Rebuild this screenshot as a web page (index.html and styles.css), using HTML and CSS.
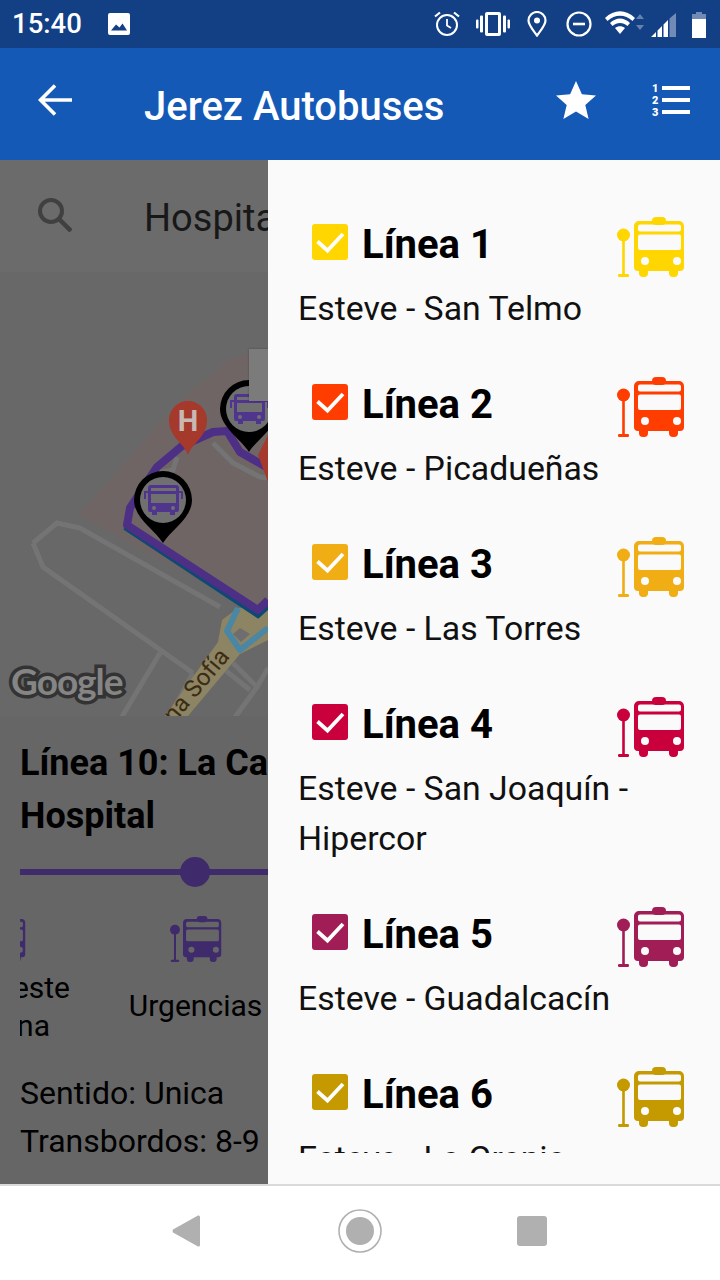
FILE: index.html
```html
<!DOCTYPE html>
<html lang="es">
<head>
<meta charset="utf-8">
<title>Jerez Autobuses</title>
<link rel="stylesheet" href="styles.css">
</head>
<body>
<svg class="defs" width="0" height="0" aria-hidden="true">
  <symbol id="bus" viewBox="0 0 68 60">
    <circle cx="6.500" cy="18" r="6.500"/>
    <rect x="5.200" y="20" width="2.600" height="38"/>
    <rect x="1" y="57" width="11" height="3" rx="1.200"/>
    <rect x="35" y="0" width="14" height="8" rx="4"/>
    <rect x="22" y="50" width="9" height="10" rx="4"/>
    <rect x="52" y="50" width="9" height="10" rx="4"/>
    <path fill-rule="evenodd" d="M22 4H62a5 5 0 0 1 5 5V50a4 4 0 0 1-4 4H21a4 4 0 0 1-4-4V9a5 5 0 0 1 5-5zM23 7.500a2 2 0 0 0-2 2V12.500a2 2 0 0 0 2 2H62a2 2 0 0 0 2-2V9.500a2 2 0 0 0-2-2zM23 17.500a2 2 0 0 0-2 2V31a2 2 0 0 0 2 2H62a2 2 0 0 0 2-2V19.500a2 2 0 0 0-2-2zM28 40a4 4 0 1 0 0 8 4 4 0 0 0 0-8zM60 40a4 4 0 1 0 0 8 4 4 0 0 0 0-8z"/>
  </symbol>
  <symbol id="tick" viewBox="0 0 36 36">
    <path d="M5.500 17.500L15.500 26.500 31 10" fill="none" stroke="#fff" stroke-width="3.800"/>
  </symbol>
  <defs>
    <g id="pin">
      <path fill="#000" d="M0 43C-8 30-29 18-29 0a29 29 0 0 1 58 0C29 18 8 30 0 43z"/>
      <circle r="23" fill="#707070"/>
      <path fill="#50358f" fill-rule="evenodd" d="M-12-15H13a3 3 0 0 1 3 3V10a2 2 0 0 1-2 2H12V15H7V12H-6V15H-11V12H-13a2 2 0 0 1-2-2V-12a3 3 0 0 1 3-3zM-12-12V-9H13V-12zM-12-6V3H13V-6zM-9 6a2 2 0 1 0 0 4 2 2 0 0 0 0-4zM10 6a2 2 0 1 0 0 4 2 2 0 0 0 0-4z"/>
      <path fill="#50358f" d="M-19-9H-15V-7H-17V-1H-19zM16-9H20V-1H18V-7H16z"/>
    </g>
  </defs>
</svg>

<div class="screen">
  <header class="status">
    <span class="clock">15:40</span>
    <svg class="st-img" viewBox="0 0 22 22"><path fill-rule="evenodd" d="M2 0H20a2 2 0 0 1 2 2V20a2 2 0 0 1-2 2H2a2 2 0 0 1-2-2V2a2 2 0 0 1 2-2zM3 17.500H19L14.500 10.500 11.500 14.500 8 11.500z" fill="#fff"/></svg>
    <span class="st-gap"></span>
    <svg class="st-ic st-alarm" viewBox="0 0 26 26" fill="none" stroke="#fff" stroke-width="2"><circle cx="13" cy="14" r="10"/><path d="M13 8v6.500l4 2.500" stroke-width="1.800"/><path d="M1 5.500L6 1.500M25 5.500L20 1.500" stroke-width="2.200"/></svg>
    <svg class="st-ic st-vib" viewBox="0 0 34 24" fill="#fff"><path fill-rule="evenodd" d="M11 0H23a2 2 0 0 1 2 2V22a2 2 0 0 1-2 2H11a2 2 0 0 1-2-2V2a2 2 0 0 1 2-2zM12 3V21H22V3z"/><rect x="4" y="3.500" width="3" height="17" rx="1"/><rect x="27" y="3.500" width="3" height="17" rx="1"/><rect x="0" y="7.500" width="2.500" height="9" rx="1"/><rect x="31.500" y="7.500" width="2.500" height="9" rx="1"/></svg>
    <svg class="st-ic st-loc" viewBox="0 0 20 26" fill="none" stroke="#fff" stroke-width="2.200"><path d="M10 24.500C5 17.500 1.500 14 1.500 9.500a8.500 8.500 0 0 1 17 0C18.500 14 15 17.500 10 24.500z"/><circle cx="10" cy="9.500" r="3" fill="#fff" stroke="none"/></svg>
    <svg class="st-ic st-dnd" viewBox="0 0 26 26" fill="none" stroke="#fff" stroke-width="2.200"><circle cx="13" cy="13" r="11.500"/><path d="M7 13H19" stroke-width="2.600"/></svg>
    <svg class="st-ic st-wifi" viewBox="0 0 40 26"><path fill="#fff" fill-rule="evenodd" d="M0 7C9-2 21-2 30 7L27.500 10C20 3 10 3 2.500 10zM5 12C11 6 19 6 25 12L22.500 15C18 11 12 11 7.500 15zM10 17C13 14.500 17 14.500 20 17L15 23z"/><path fill="#fff" opacity=".35" d="M35 3l4 5h-8zM35 19l4-5h-8z"/></svg>
    <svg class="st-ic st-sig" viewBox="0 0 25 24"><path fill="#fff" d="M0 24L5 19V24zM6.500 24V17.500L11 13V24zM12.500 24V11.500L17 7V24z"/><path fill="#fff" opacity=".4" d="M18.500 24V5.500L25 0V24z"/></svg>
    <svg class="st-ic st-bat" viewBox="0 0 14 26"><path fill="#fff" opacity=".4" d="M4 0H10V2H14V9H0V2H4z"/><rect y="7" width="14" height="19" fill="#fff"/></svg>
  </header>

  <nav class="appbar">
    <svg class="ab-back" viewBox="0 0 34 32" fill="none" stroke="#fff" stroke-width="3.600"><path d="M34 16H3M17 1.500L2.500 16 17 30.500"/></svg>
    <h1 class="ab-title">Jerez Autobuses</h1>
    <svg class="ab-star" viewBox="0 0 40 38"><path fill="#fff" d="M20 0l5.900 13.300 14.100 1.300-10.700 9.300 3.300 14.100L20 30.600 7.400 38l3.300-14.100L0 14.600l14.100-1.300z"/></svg>
    <svg class="ab-list" viewBox="0 0 38 32"><g fill="#fff"><rect x="10" y="2" width="28" height="4"/><rect x="10" y="14" width="28" height="4"/><rect x="10" y="26" width="28" height="4"/></g><g class="ab-num"><text x="0" y="8">1</text><text x="0" y="20">2</text><text x="0" y="32">3</text></g></svg>
  </nav>

  <main class="content">
    <section class="page">
      <div class="search">
        <svg class="search-ic" viewBox="0 0 34 34" fill="none" stroke="#404040" stroke-width="4"><circle cx="13" cy="13" r="11"/><path d="M21 21L33 33" stroke-width="4.500"/></svg>
        <span class="search-text">Hospital</span>
      </div>
      <div class="map">
        <svg class="map-svg" viewBox="0 272 268 444">
          <polygon class="m-zone" points="78,515 180,400 230,358 268,350 268,600 258,612"/>
          <path class="m-road" d="M33 543L57 523 80 528 220 607M33 543L43 567 193 673M160 653L120 720M193 673L170 716M233 663L257 687 233 720M225 670L250 690M268 668L257 687"/>
          <path class="m-road" d="M213 443L233 463 260 477 268 478M177 457L173 470 157 473"/>
          <polygon class="m-yellow" points="222,620 238,608 268,606 268,640 240,654 188,716 165,716 218,642"/>
          <polygon class="m-inner" points="240,628 250,634 241,642 233,634"/>
          <path class="m-blue" d="M238 608L227 631 240 650 268 628"/>
          <path class="m-navy" d="M125 527L258 615 268 606"/>
          <path class="m-route" d="M268 468L240 452 227 431 213 432 182 446 157 467 130 508 127 525 258 610 268 600"/>
          <g class="m-red"><path d="M188 455C184 443 169 437 169 420a19 19 0 0 1 38 0C207 437 192 443 188 455z"/><path d="M268 482L258 455 268 435z"/></g>
          <text class="m-h" x="188" y="431" text-anchor="middle">H</text>
          <use href="#pin" x="249" y="409"/>
          <use href="#pin" x="163" y="500"/>
          <text class="m-street" transform="translate(174 724) rotate(-50)">na Sofía</text>
          <text class="m-google" x="11" y="695">Google</text>
        </svg>
      </div>
      <div class="map-tool"></div>
      <div class="info">
        <h2 class="info-title"><span class="info-line">Línea 10: La Ca</span><span class="info-line">Hospital</span></h2>
        <div class="slider"><span class="slider-dot"></span></div>
        <div class="stops">
          <div class="stop stop-a">
            <svg class="stop-ic"><use href="#bus"/></svg>
            <span class="stop-l1">este</span>
            <span class="stop-l2">na</span>
          </div>
          <div class="stop stop-b">
            <svg class="stop-ic"><use href="#bus"/></svg>
            <span class="stop-name">Urgencias</span>
          </div>
        </div>
        <p class="info-text">Sentido: Unica</p>
        <p class="info-text">Transbordos: 8-9</p>
      </div>
    </section>

    <aside class="drawer">
      <ul class="lines">
        <li class="line l1">
          <div class="line-head"><span class="check"><svg><use href="#tick"/></svg></span><span class="line-name">Línea 1</span><svg class="line-bus"><use href="#bus"/></svg></div>
          <p class="line-sub">Esteve - San Telmo</p>
        </li>
        <li class="line l2">
          <div class="line-head"><span class="check"><svg><use href="#tick"/></svg></span><span class="line-name">Línea 2</span><svg class="line-bus"><use href="#bus"/></svg></div>
          <p class="line-sub">Esteve - Picadueñas</p>
        </li>
        <li class="line l3">
          <div class="line-head"><span class="check"><svg><use href="#tick"/></svg></span><span class="line-name">Línea 3</span><svg class="line-bus"><use href="#bus"/></svg></div>
          <p class="line-sub">Esteve - Las Torres</p>
        </li>
        <li class="line l4">
          <div class="line-head"><span class="check"><svg><use href="#tick"/></svg></span><span class="line-name">Línea 4</span><svg class="line-bus"><use href="#bus"/></svg></div>
          <p class="line-sub">Esteve - San Joaquín - Hipercor</p>
        </li>
        <li class="line l5">
          <div class="line-head"><span class="check"><svg><use href="#tick"/></svg></span><span class="line-name">Línea 5</span><svg class="line-bus"><use href="#bus"/></svg></div>
          <p class="line-sub">Esteve - Guadalcacín</p>
        </li>
        <li class="line l6">
          <div class="line-head"><span class="check"><svg><use href="#tick"/></svg></span><span class="line-name">Línea 6</span><svg class="line-bus"><use href="#bus"/></svg></div>
          <p class="line-sub">Esteve - La Granja</p>
        </li>
      </ul>
    </aside>
  </main>

  <footer class="navbar">
    <svg class="nav-back" viewBox="0 0 28 32"><path d="M26 0.500Q28 0 28 2V30Q28 32 26 31.500L1 17.500Q0 16 1 14.500z"/></svg>
    <svg class="nav-home" viewBox="0 0 44 44"><circle cx="22" cy="22" r="21" fill="none" stroke="#b0b0b0" stroke-width="1.600"/><circle cx="22" cy="22" r="14" fill="#b0b0b0"/></svg>
    <span class="nav-recent"></span>
  </footer>
</div>
</body>
</html>
```

FILE: styles.css
```css
* { box-sizing: border-box; }
html, body { margin: 0; padding: 0; }
body { font-family: Roboto, "Noto Sans", sans-serif; background: #fff; color: #000; }
p, h1, h2, ul { margin: 0; padding: 0; }
ul { list-style: none; }
.defs { position: absolute; }
.screen { width: 720px; height: 1280px; display: flex; flex-direction: column; overflow: hidden; }

.status { height: 48px; background: #133f85; display: flex; align-items: center; padding-left: 12px; color: #fff; }
.clock { font-size: 27.5px; font-weight: 500; line-height: 48px; width: 96px; }
.st-img { width: 22px; height: 22px; }
.st-gap { flex: 1; }
.st-ic { display: block; }
.st-alarm { width: 26px; height: 26px; margin-right: 16px; }
.st-vib { width: 34px; height: 24px; margin-right: 17px; }
.st-loc { width: 20px; height: 26px; margin-right: 19px; }
.st-dnd { width: 26px; height: 26px; margin-right: 13px; }
.st-wifi { width: 40px; height: 26px; margin-right: 6px; }
.st-sig { width: 25px; height: 24px; margin-right: 16px; margin-top: 2px; }
.st-bat { width: 14px; height: 26px; margin-right: 14px; margin-top: 1px; }

.appbar { height: 112px; background: #1559b7; display: flex; align-items: center; color: #fff; padding-left: 38px; }
.ab-back { width: 34px; height: 32px; margin-top: -8px; margin-right: 72px; }
.ab-title { font-size: 40px; font-weight: 500; line-height: 112px; flex: 1; margin-top: 6px; }
.ab-star { width: 40px; height: 38px; margin-top: -8px; margin-right: 56px; }
.ab-list { width: 38px; height: 32px; margin-top: -8px; margin-right: 30px; overflow: visible; }
.ab-num { fill: #fff; font-size: 11px; font-weight: 900; font-family: Roboto, sans-serif; }

.content { position: relative; flex: 1; min-height: 0; overflow: hidden; }
.page { height: 100%; background: #666; display: flex; flex-direction: column; }

.search { height: 112px; display: flex; align-items: center; padding-left: 38px; background: #6b6b6b; }
.search-ic { width: 34px; height: 34px; margin-right: 72px; margin-top: -2px; }
.search-text { font-size: 38px; color: #181818; margin-top: 4px; }

.map { height: 444px; background: #686868; overflow: hidden; }
.map-svg { display: block; width: 268px; height: 444px; }
.m-zone { fill: #6f6565; }
.m-road { fill: none; stroke: #747474; stroke-width: 5; }
.m-yellow { fill: #8c8462; }
.m-inner { fill: #6e6e6e; }
.m-blue { fill: none; stroke: #4a87a5; stroke-width: 6; stroke-linejoin: round; }
.m-navy { fill: none; stroke: #0c4a75; stroke-width: 6; }
.m-route { fill: none; stroke: #4d2f85; stroke-width: 8; stroke-linejoin: round; }
.m-red { fill: #a5392c; }
.m-h { font: 700 29px Roboto, sans-serif; fill: #c8b8b4; }
.m-street { font: 400 24px Roboto, sans-serif; fill: #3c2c14; }
.m-google { font: 700 37px Lato, sans-serif; letter-spacing: -1px; fill: #858585; stroke: #333; stroke-width: 7; paint-order: stroke; }

.map-tool { position: absolute; left: 249px; top: 189px; width: 19px; height: 52px; background: #7b7b7b; box-shadow: 0 0 2px rgba(0, 0, 0, .3); }

.info { flex: 1; background: #666; padding: 21px 0 0 20px; position: relative; }
.info-title { font-size: 36px; font-weight: 700; line-height: 53px; }
.info-line { display: block; white-space: nowrap; }
.slider { height: 6px; margin: 26px 0 0 0; background: #3f2a6b; position: relative; }
.slider-dot { position: absolute; left: 160px; top: -12px; width: 30px; height: 30px; border-radius: 50%; background: #3f2a6b; }
.stops { display: flex; overflow: hidden; height: 153px; margin-top: 41px; color: #000; font-size: 30px; line-height: 38px; }
.stop { display: flex; flex-direction: column; flex: none; }
.stop-ic { width: 52px; height: 46px; color: #3f2a6b; fill: currentColor; flex: none; }
.stop-a { width: 50px; align-items: flex-end; }
.stop-a .stop-ic { margin: 0 44px 7px 0; }
.stop-l1, .stop-l2 { display: block; }
.stop-l2 { margin-right: 20px; }
.stop-b { width: 133px; margin-left: 59px; align-items: center; }
.stop-b .stop-ic { margin-bottom: 25px; }
.stop-name { white-space: nowrap; }
.info-text { font-size: 32px; line-height: 48px; color: #000; }

.drawer { position: absolute; top: 0; right: 0; bottom: 0; width: 452px; background: #fafafa; }
.lines { height: 993px; overflow: hidden; padding-top: 44px; }
.line { padding: 0 36px 30px 30px; color: var(--c); }
.line-head { display: flex; align-items: center; height: 80px; }
.check { width: 36px; height: 36px; border-radius: 3px; margin: -4px 14px 0 14px; background: var(--c); flex: none; }
.check svg { display: block; width: 36px; height: 36px; }
.line-name { font-size: 40px; font-weight: 700; color: #000; flex: 1; }
.line-bus { width: 68px; height: 60px; fill: currentColor; flex: none; margin-top: 6px; margin-right: -1px; }
.line-sub { font-size: 33.8px; line-height: 50px; color: #111; }
.l1 { --c: #ffd600; }
.l2 { --c: #ff3d00; }
.l3 { --c: #f0ad14; }
.l4 { --c: #c9003c; }
.l5 { --c: #a01e55; }
.l6 { --c: #c49a00; }

.navbar { height: 96px; flex: none; background: #fff; border-top: 2px solid #d9d9d9; display: flex; align-items: center; position: relative; padding: 0 0 4px 172px; }
.nav-back { width: 28px; height: 32px; fill: #b0b0b0; margin-right: 138px; }
.nav-home { width: 44px; height: 44px; margin-right: 135px; }
.nav-recent { width: 30px; height: 30px; border-radius: 3px; background: #b0b0b0; }
```
